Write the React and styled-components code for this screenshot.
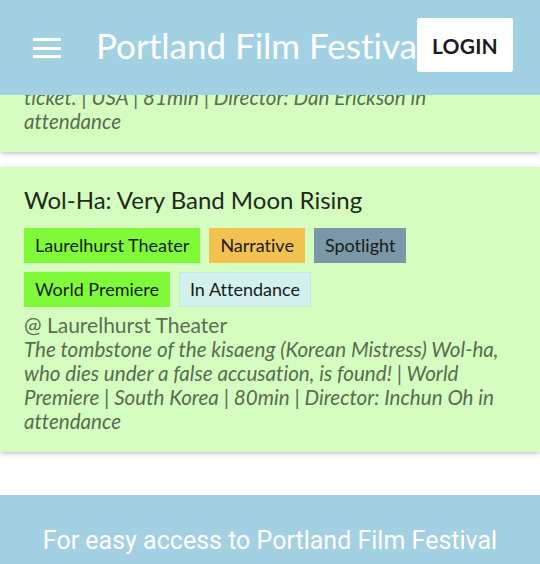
import React from 'react';
import styled, { createGlobalStyle } from 'styled-components';

const GlobalStyle = createGlobalStyle`
  html, body {
    margin: 0;
    padding: 0;
    background: #ffffff;
    font-family: Lato, "Open Sans", sans-serif;
    font-variant-ligatures: no-common-ligatures;
    overflow: hidden;
  }
`;

const films = [
  {
    id: 1,
    description: 'ticket. | USA | 81min | Director: Dan Erickson in attendance',
  },
  {
    id: 2,
    title: 'Wol-Ha: Very Band Moon Rising',
    tags: [
      { label: 'Laurelhurst Theater', kind: 'venue' },
      { label: 'Narrative', kind: 'narrative' },
      { label: 'Spotlight', kind: 'spotlight' },
      { label: 'World Premiere', kind: 'premiere' },
      { label: 'In Attendance', kind: 'attendance' },
    ],
    location: '@ Laurelhurst Theater',
    description:
      'The tombstone of the kisaeng (Korean Mistress) Wol-ha, who dies under a false accusation, is found! | World Premiere | South Korea | 80min | Director: Inchun Oh in attendance',
  },
];

const tagColors = {
  venue: { bg: '#7ffa39', border: '#7ffa39' },
  narrative: { bg: '#f2c150', border: '#f2c150' },
  spotlight: { bg: '#7a98a7', border: '#7a98a7' },
  premiere: { bg: '#7ffa39', border: '#7ffa39' },
  attendance: { bg: '#d2f1ee', border: '#c2e9df' },
};

const AppBar = styled.header`
  position: fixed;
  top: 0;
  left: 0;
  right: 0;
  z-index: 2;
  height: 95px;
  box-sizing: border-box;
  padding: 0 27px 5px 33px;
  display: flex;
  align-items: center;
  background: #a3d1e4;
`;

const MenuButton = styled.button`
  flex: none;
  width: 28px;
  height: 20px;
  padding: 0;
  margin: 6px 35px 0 0;
  border: none;
  background: none;
  display: flex;
  flex-direction: column;
  justify-content: space-between;
`;

const MenuLine = styled.span`
  display: block;
  height: 3px;
  background: #ffffff;
`;

const Title = styled.h1`
  flex: 1;
  min-width: 0;
  margin: 0;
  font-size: 35px;
  font-weight: 400;
  color: #ffffff;
  white-space: nowrap;
`;

const LoginButton = styled.button`
  position: relative;
  flex: none;
  width: 96px;
  height: 54px;
  border: none;
  border-radius: 3px;
  background: #ffffff;
  color: #1c1c1c;
  font-family: Lato, sans-serif;
  font-weight: 700;
  font-size: 21px;
  letter-spacing: 0.2px;
`;

const Feed = styled.main`
  padding-top: 66px;
  display: flex;
  flex-direction: column;
  gap: 15px;
`;

const Card = styled.article`
  background: #d6fdc0;
  padding: 19px 30px 19px 24px;
  box-shadow: 0 2px 4px -1px rgba(0, 0, 0, 0.18), 0 1px 8px rgba(0, 0, 0, 0.12);
`;

const FilmTitle = styled.h2`
  margin: 0 0 13px;
  font-size: 24px;
  line-height: 1.2;
  font-weight: 400;
  color: #1d2a1a;
`;

const TagList = styled.div`
  display: flex;
  flex-wrap: wrap;
  gap: 9px;
  margin-bottom: 6px;
`;

const Tag = styled.span`
  box-sizing: border-box;
  height: 35px;
  padding: 7px 10px;
  font-size: 18px;
  line-height: 21px;
  color: #1a1a1a;
  background: ${(p) => tagColors[p.$kind].bg};
  border: 1px solid ${(p) => tagColors[p.$kind].border};
  display: inline-flex;
  align-items: center;
`;

const Location = styled.div`
  font-size: 21px;
  line-height: 24px;
  color: #59704f;
`;

const Description = styled.p`
  margin: 0;
  font-size: 20.6px;
  line-height: 24px;
  font-style: italic;
  color: #566d4f;
`;

const Footer = styled.footer`
  margin-top: 43px;
  padding: 28px 30px 30px;
  background: #a3d0e3;
  text-align: center;
  font-family: Roboto, sans-serif;
  font-size: 25px;
  line-height: 36px;
  color: #ffffff;
`;

const App = () => (
  <>
    <GlobalStyle />
    <AppBar>
      <MenuButton aria-label='menu'>
        <MenuLine />
        <MenuLine />
        <MenuLine />
      </MenuButton>
      <Title>Portland Film Festival</Title>
      <LoginButton>LOGIN</LoginButton>
    </AppBar>
    <Feed>
      {films.map((film) => (
        <Card key={film.id}>
          {film.title && <FilmTitle>{film.title}</FilmTitle>}
          {film.tags && (
            <TagList>
              {film.tags.map((tag) => (
                <Tag key={tag.label} $kind={tag.kind}>
                  {tag.label}
                </Tag>
              ))}
            </TagList>
          )}
          {film.location && <Location>{film.location}</Location>}
          <Description>{film.description}</Description>
        </Card>
      ))}
    </Feed>
    <Footer>
      For easy access to Portland Film Festival info, add this web app to your home screen
    </Footer>
  </>
);

export default App;
